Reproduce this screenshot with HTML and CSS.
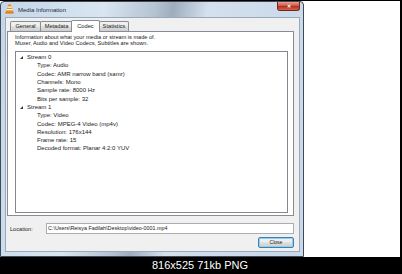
FILE: index.html
```html
<!DOCTYPE html>
<html lang="en">
<head>
    <meta charset="UTF-8">
    <title>Media Information</title>
    <link rel="stylesheet" href="styles.css">
</head>
<body>
    <div class="thumb">
        <div class="shot">
            <div class="window">
                <div class="titlebar">
                    <svg class="app-icon" width="9" height="10" viewBox="0 0 9 10">
                        <polygon points="3.2,0.5 5.8,0.5 8,7.5 1,7.5" fill="#f08a10"/>
                        <polygon points="2.6,2.6 6.4,2.6 6.8,3.8 2.2,3.8" fill="#ffffff"/>
                        <polygon points="1.8,5 7.2,5 7.5,6.2 1.5,6.2" fill="#ffffff"/>
                        <rect x="0.3" y="7.5" width="8.4" height="2" rx="0.6" fill="#e07a08"/>
                    </svg>
                    <span class="title">Media Information</span>
                    <div class="close-x">&#x2715;</div>
                </div>
                <div class="client">
                    <div class="tabs">
                        <div class="tab tab-general">General</div>
                        <div class="tab tab-meta">Metadata</div>
                        <div class="tab tab-codec active">Codec</div>
                        <div class="tab tab-stats">Statistics</div>
                    </div>
                    <div class="pane">
                        <p class="info">Information about what your media or stream is made of.<br>Muxer, Audio and Video Codecs, Subtitles are shown.</p>
                        <div class="tree">
                            <div class="node"><span class="arrow"></span>Stream 0</div>
                            <div class="leaf">Type: Audio</div>
                            <div class="leaf">Codec: AMR narrow band (samr)</div>
                            <div class="leaf">Channels: Mono</div>
                            <div class="leaf">Sample rate: 8000 Hz</div>
                            <div class="leaf">Bits per sample: 32</div>
                            <div class="node"><span class="arrow"></span>Stream 1</div>
                            <div class="leaf">Type: Video</div>
                            <div class="leaf">Codec: MPEG-4 Video (mp4v)</div>
                            <div class="leaf">Resolution: 176x144</div>
                            <div class="leaf">Frame rate: 15</div>
                            <div class="leaf">Decoded format: Planar 4:2:0 YUV</div>
                        </div>
                    </div>
                    <div class="location-row">
                        <span class="location-label">Location:</span>
                        <div class="location-input">C:\Users\Reisya Fadilah\Desktop\video-0001.mp4</div>
                    </div>
                    <div class="button-row">
                        <button class="close-btn">Close</button>
                    </div>
                </div>
            </div>
        </div>
        <div class="caption">816x525 71kb PNG</div>
    </div>
</body>
</html>
```

FILE: styles.css
```css
body {
    margin: 0;
    background-color: #000;
    font-family: "Liberation Sans", Arial, sans-serif;
}

.thumb {
    width: 402px;
    height: 274px;
    box-sizing: border-box;
    padding: 1px 2px 0 0;
    background-color: #000;
}

.shot {
    height: 256px;
    background-color: #fff;
    display: flex;
}

/* window frame */
.window {
    width: 304px;
    height: 256px;
    box-sizing: border-box;
    border: 1px solid #404a55;
    border-radius: 4px 4px 0 0;
    padding: 0 3px 4px 4px;
    display: flex;
    flex-direction: column;
    background: linear-gradient(100deg, #c4d6e9 0%, #d9e5f1 30%, #b3c2d1 45%, #9eadbd 50%, #d3e0ed 60%, #c6d8ea 100%);
}

.titlebar {
    height: 15px;
    display: flex;
    align-items: flex-start;
}

.app-icon {
    margin: 2px 4px 0 0;
}

.title {
    font-size: 6px;
    line-height: 6px;
    margin-top: 5px;
    color: #1c2a38;
}

.close-x {
    margin-left: auto;
    width: 23px;
    height: 9px;
    box-sizing: border-box;
    border: 1px solid #6a2a22;
    border-top: none;
    border-radius: 0 0 3px 3px;
    background: linear-gradient(#e4a194, #cf5a45 45%, #b8301c 55%, #d4634c);
    color: #fff;
    font-size: 5px;
    line-height: 8px;
    text-align: center;
    font-weight: bold;
}

.client {
    flex: 1;
    border: 1px solid #98a9ba;
    background-color: #f0f0f0;
    display: flex;
    flex-direction: column;
}

/* tabs */
.tabs {
    display: flex;
    align-items: flex-end;
    height: 11px;
    margin: 2px 0 0 4px;
    position: relative;
    z-index: 1;
}

.tab {
    height: 10px;
    box-sizing: border-box;
    border: 1px solid #898c95;
    border-bottom: none;
    border-radius: 2px 2px 0 0;
    background: linear-gradient(#f2f2f2, #ebebeb 45%, #dddddd 55%, #cfcfcf);
    font-size: 5.7px;
    line-height: 9px;
    text-align: center;
    color: #1a1a1a;
    margin-right: -1px;
}

.tab-general { width: 31px; }
.tab-meta { width: 33px; }
.tab-codec { width: 29px; }
.tab-stats { width: 30px; }

.tab.active {
    height: 12px;
    line-height: 10px;
    background: #fff;
    margin: 0 -1px -1px -1px;
    position: relative;
    z-index: 2;
}

.pane {
    margin: 0 5px 0 1px;
    height: 185px;
    box-sizing: border-box;
    border: 1px solid #898c95;
    background-color: #fff;
    padding: 3px 5px 2px 7px;
    display: flex;
    flex-direction: column;
}

.info {
    margin: 0;
    font-size: 5.6px;
    line-height: 5.6px;
    color: #1a1a1a;
}

.tree {
    flex: 1;
    margin-top: 5px;
    border: 1px solid #828790;
    background-color: #fff;
    padding-top: 1px;
}

.node, .leaf {
    font-size: 6px;
    line-height: 8.3px;
    height: 8.3px;
    color: #1a1a1a;
    white-space: nowrap;
}

.node {
    display: flex;
    align-items: center;
    padding-left: 4px;
}

.leaf {
    padding-left: 21px;
}

.arrow {
    width: 0;
    height: 0;
    border-left: 3px solid transparent;
    border-bottom: 3px solid #333;
    margin-right: 4px;
}

/* location */
.location-row {
    display: flex;
    align-items: center;
    margin: 7px 5px 0 4px;
    height: 11px;
}

.location-label {
    width: 36px;
    font-size: 5.6px;
    color: #1a1a1a;
}

.location-input {
    flex: 1;
    height: 11px;
    box-sizing: border-box;
    border: 1px solid #abadb3;
    background-color: #fff;
    font-size: 5.4px;
    line-height: 9px;
    padding-left: 1px;
    color: #1a1a1a;
}

.button-row {
    display: flex;
    justify-content: flex-end;
    margin: 3px 5px 0 0;
}

.close-btn {
    width: 36px;
    height: 11px;
    padding: 0;
    border: 1px solid #3c7fb1;
    border-radius: 2px;
    background: linear-gradient(#f2f2f2, #ebebeb 45%, #dddddd 55%, #cfcfcf);
    box-shadow: inset 0 0 0 1px #8fd0f2;
    font-family: "Liberation Sans", Arial, sans-serif;
    font-size: 5px;
    line-height: 9px;
    color: #1a1a1a;
}

.caption {
    height: 17px;
    color: #fff;
    font-size: 11px;
    line-height: 17px;
    text-align: center;
}
```
